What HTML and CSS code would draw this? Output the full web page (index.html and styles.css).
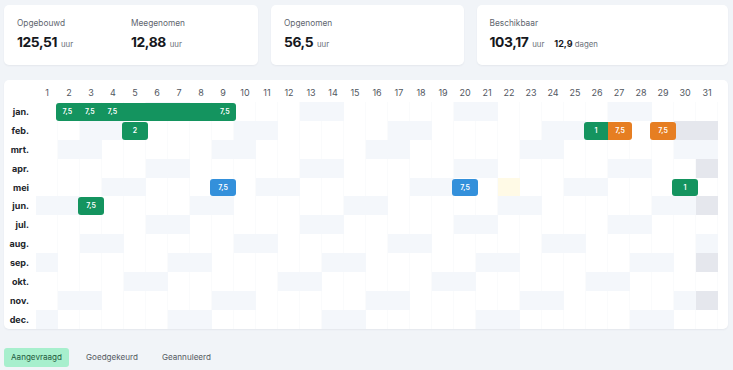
FILE: index.html
```html
<!DOCTYPE html>
<html lang="nl">
<head>
  <meta charset="UTF-8" />
  <title>Verlof overzicht</title>
  <link rel="stylesheet" href="styles.css">
</head>
<body>

  <div class="stats">
    <div class="card">
      <div class="stat">
        <div class="stat-label">Opgebouwd</div>
        <div class="stat-value">125,51 <span class="unit">uur</span></div>
      </div>
      <div class="stat">
        <div class="stat-label">Meegenomen</div>
        <div class="stat-value">12,88 <span class="unit">uur</span></div>
      </div>
    </div>
    <div class="card">
      <div class="stat">
        <div class="stat-label">Opgenomen</div>
        <div class="stat-value">56,5 <span class="unit">uur</span></div>
      </div>
    </div>
    <div class="card">
      <div class="stat">
        <div class="stat-label">Beschikbaar</div>
        <div class="stat-value">103,17 <span class="unit">uur</span>
          <span class="days"><b>12,9</b> dagen</span></div>
      </div>
    </div>
  </div>

  <div class="card calendar-card">
    <div class="calendar" id="calendar"></div>
  </div>

  <div class="tabs">
    <span class="tab active">Aangevraagd</span>
    <span class="tab">Goedgekeurd</span>
    <span class="tab">Geannuleerd</span>
  </div>

  <script>
    const months = ['jan.', 'feb.', 'mrt.', 'apr.', 'mei', 'jun.', 'jul.', 'aug.', 'sep.', 'okt.', 'nov.', 'dec.'];
    const year = 2024;
    const cal = document.getElementById('calendar');

    // day header
    cal.appendChild(document.createElement('div'));
    for (let d = 1; d <= 31; d++) {
      const h = document.createElement('div');
      h.className = 'day-head';
      h.textContent = d;
      cal.appendChild(h);
    }

    // month rows
    for (let m = 0; m < 12; m++) {
      const label = document.createElement('div');
      label.className = 'month';
      label.textContent = months[m];
      label.style.gridRow = m + 2;
      cal.appendChild(label);

      const daysInMonth = new Date(year, m + 1, 0).getDate();
      for (let d = 1; d <= 31; d++) {
        const cell = document.createElement('div');
        cell.className = 'cell';
        if (d > daysInMonth) {
          cell.className += ' none';
        } else {
          const wd = new Date(year, m, d).getDay();
          if (wd === 0 || wd === 6) cell.className += ' weekend';
        }
        cell.style.gridRow = m + 2;
        cell.style.gridColumn = d + 1;
        cal.appendChild(cell);
      }
    }

    // [month, from, to, colour, labels, join]
    const items = [
      [0, 2, 9, 'green', ['7,5', '7,5', '7,5', '', '', '', '', '7,5']],
      [1, 5, 5, 'green', ['2']],
      [1, 26, 26, 'green', ['1'], 'left'],
      [1, 27, 27, 'orange', ['7,5'], 'right'],
      [1, 29, 29, 'orange', ['7,5']],
      [4, 9, 9, 'blue', ['7,5']],
      [4, 20, 20, 'blue', ['7,5']],
      [4, 30, 30, 'green', ['1']],
      [5, 3, 3, 'green', ['7,5']]
    ];

    const today = document.createElement('div');
    today.className = 'today';
    today.style.gridRow = 4 + 2;
    today.style.gridColumn = 22 + 1;
    cal.appendChild(today);

    items.forEach(function(it) {
      const bar = document.createElement('div');
      bar.className = 'bar ' + it[3] + (it[5] ? ' ' + it[5] : '');
      bar.style.gridRow = it[0] + 2;
      bar.style.gridColumn = (it[1] + 1) + ' / ' + (it[2] + 2);
      it[4].forEach(function(t) {
        const s = document.createElement('span');
        s.textContent = t;
        bar.appendChild(s);
      });
      cal.appendChild(bar);
    });
  </script>

</body>
</html>
```

FILE: styles.css
```css
body { font-family: Inter, "Noto Sans", sans-serif; margin: 0; padding: 5px 5px 0 4px; background: #f1f4f8; color: #16181d; }
.card { background: #fff; border-radius: 5px; box-shadow: 0 1px 2px rgba(30, 40, 60, 0.06); }

.stats { display: grid; grid-template-columns: 253fr 193fr 252fr; column-gap: 13px; }
.stats .card { display: flex; height: 60px; padding: 0 13px; box-sizing: border-box; }
.stat { width: 114px; padding-top: 13px; }
.stat-label { font-size: 8.3px; color: #60656e; }
.stat-value { font-size: 13.8px; font-weight: 700; margin-top: 6px; letter-spacing: -0.4px; white-space: nowrap; }
.unit { font-size: 7.8px; font-weight: 400; color: #6b7079; margin-left: 1px; letter-spacing: 0; }
.days { font-size: 7.8px; font-weight: 400; color: #6b7079; margin-left: 7px; letter-spacing: 0; }
.days b { font-size: 9px; color: #16181d; }

.calendar-card { margin-top: 15px; padding: 4px 10px 0 0; height: 249px; box-sizing: border-box; overflow: hidden; }
.calendar { display: grid; grid-template-columns: 32px repeat(31, 22px); grid-template-rows: 18px repeat(12, 18.9px); }
.day-head { font-size: 9px; color: #52575f; text-align: center; line-height: 18px; }
.month { grid-column: 1; font-size: 9px; font-weight: 700; color: #22252b; text-align: right; padding-right: 7px; line-height: 19px; }
.cell { border-right: 1px solid #fafbfc; }
.cell.weekend { background: #f4f7fb; border-right-color: #f4f7fb; }
.cell.none { background: #e5e7ed; border-right-color: #e5e7ed; }
.today { background: #fffae6; }

.bar { display: flex; margin: 1px -2px 0; border-radius: 3px; color: #fff; font-size: 7px; font-weight: 600; z-index: 1; }
.bar span { flex: 1; text-align: center; line-height: 18px; }
.bar.left { margin-right: 0; border-radius: 3px 0 0 3px; }
.bar.right { margin-left: 0; border-radius: 0 3px 3px 0; }
.green { background: #14945f; }
.orange { background: #e67e22; }
.blue { background: #3390db; }

.tabs { display: flex; gap: 10px; margin-top: 19px; }
.tab { font-size: 8.1px; color: #555a62; padding: 0 7px; line-height: 19px; border-radius: 3px; }
.tab.active { background: #a7efcd; color: #1d5a3c; }
```
